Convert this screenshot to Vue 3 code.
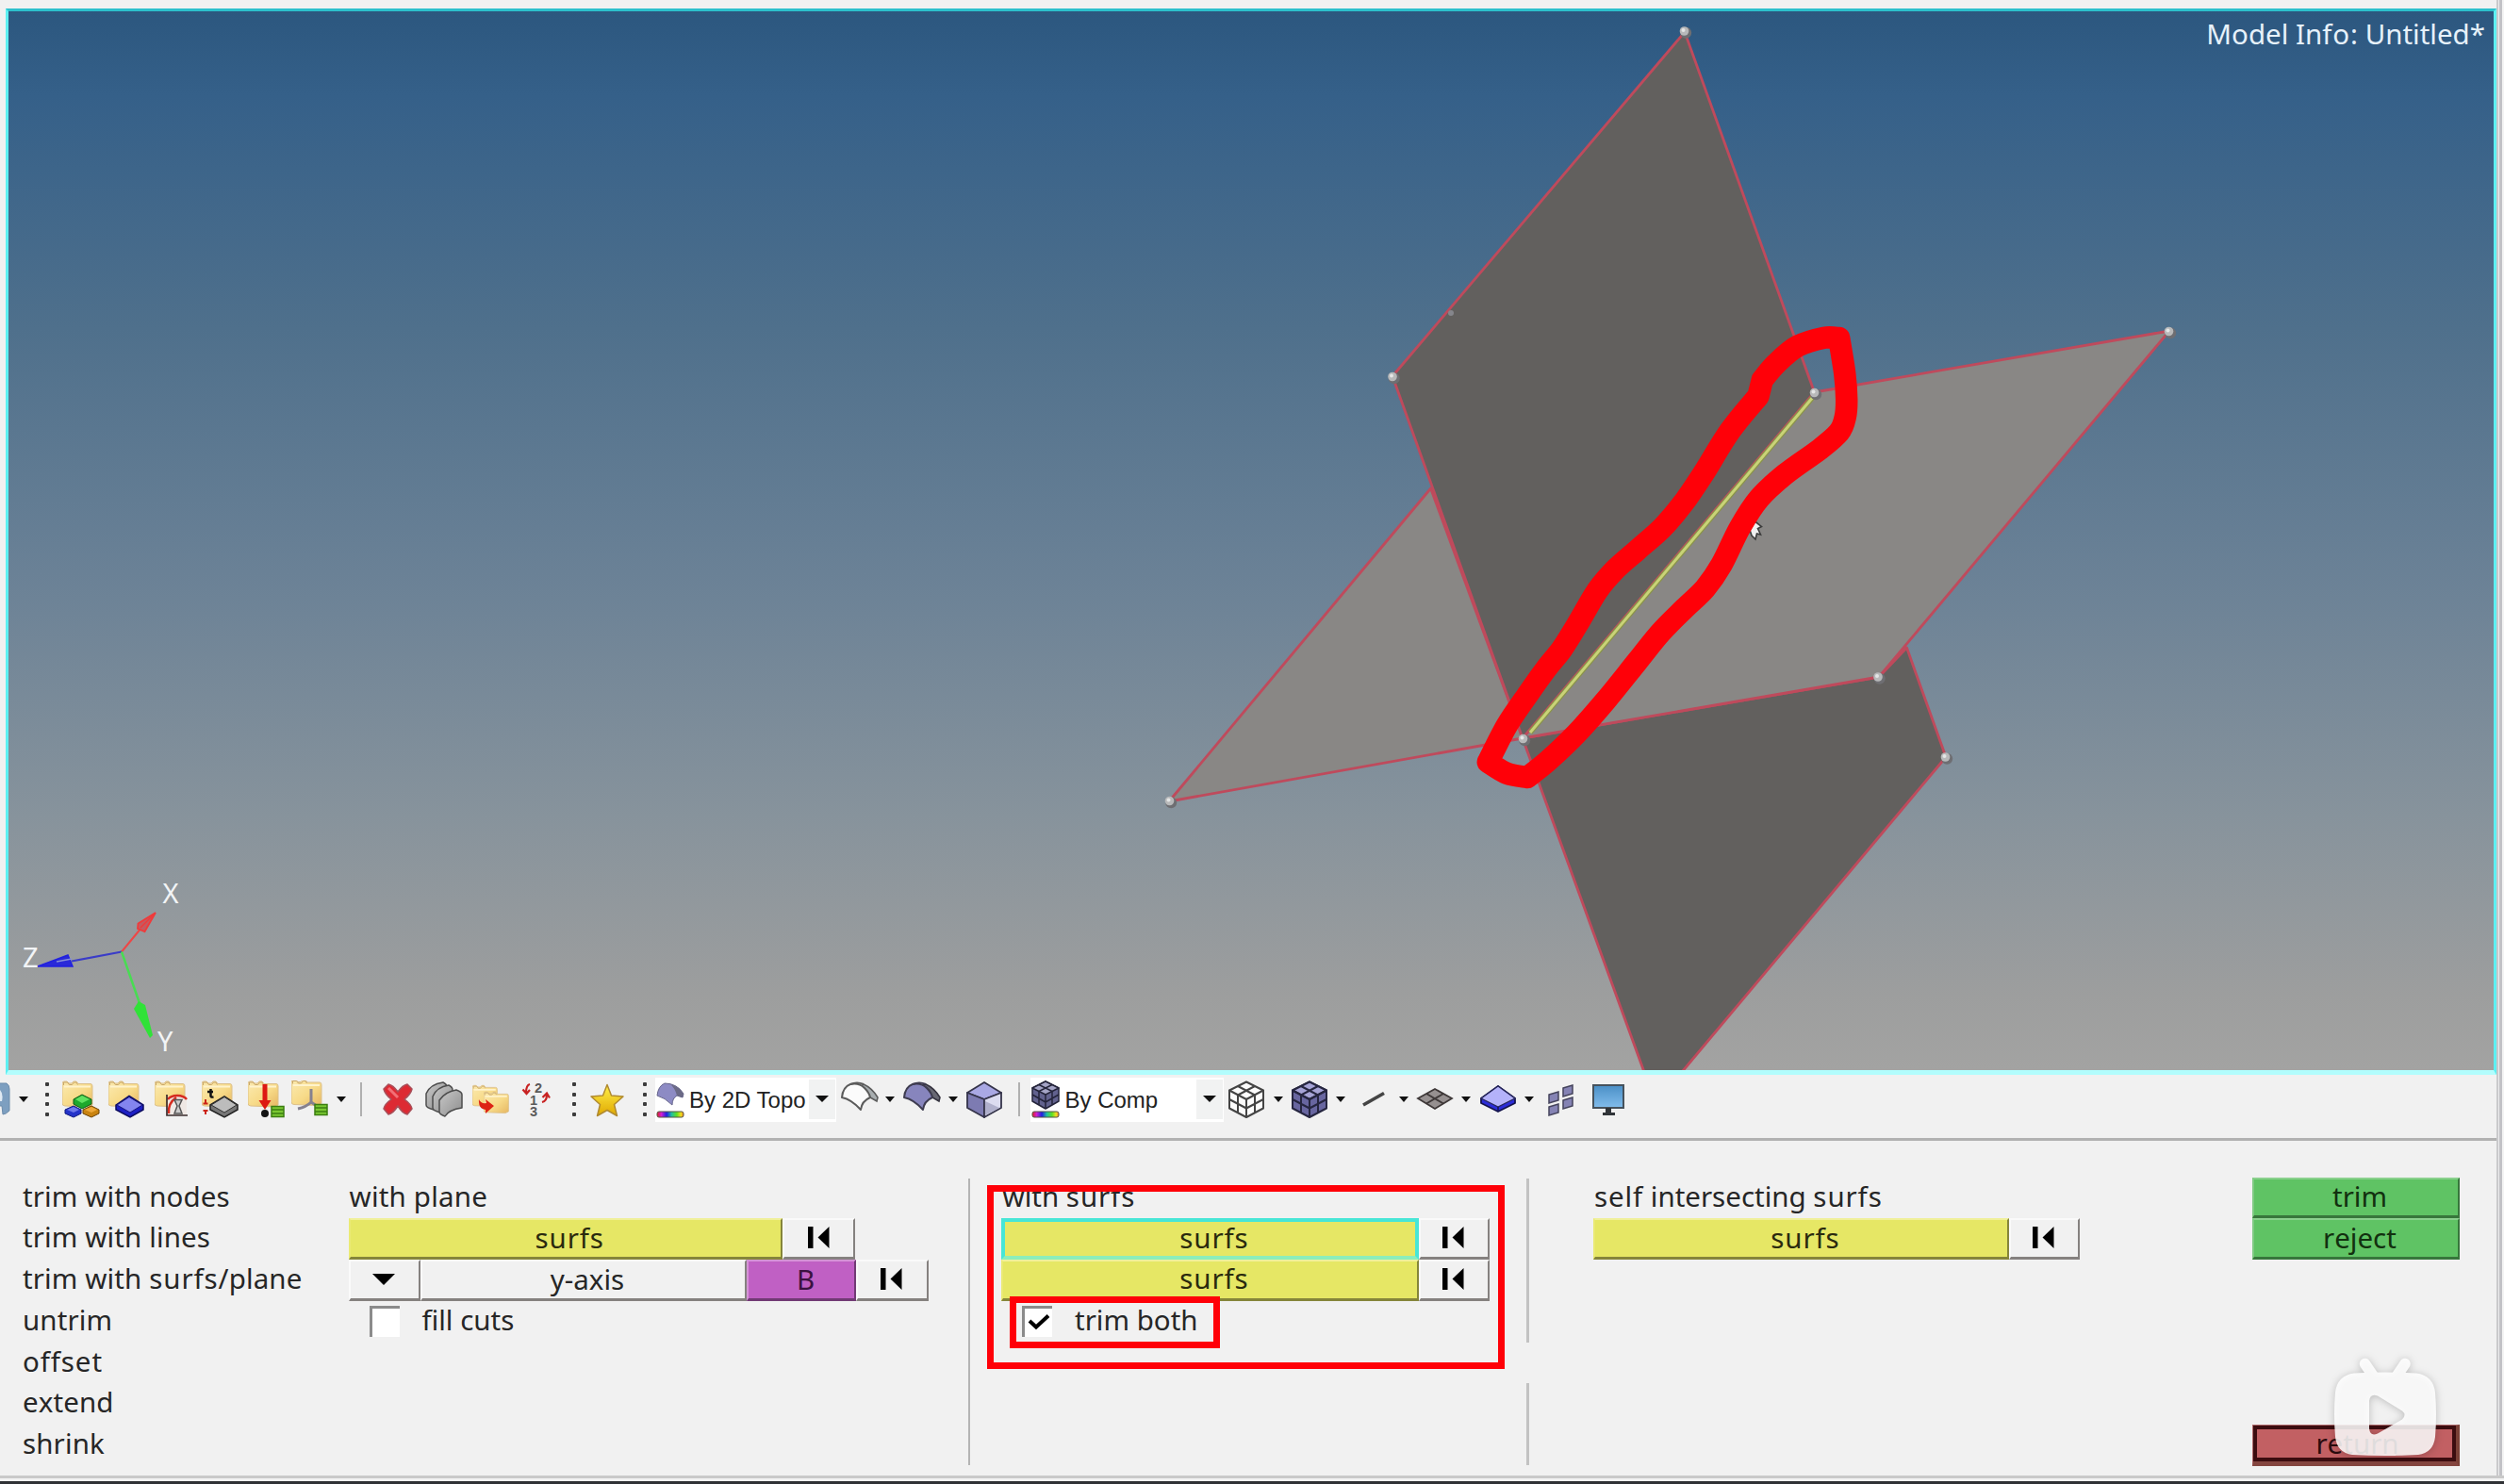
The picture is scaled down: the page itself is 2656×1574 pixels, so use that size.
<script setup>
// Each entry: leading text, the loosely spaced word, trailing text.
const menu = [
  ['trim with nodes'], ['trim with lines'], ['trim with ', 'surfs', '/plane'],
  ['untrim'], ['', 'offset'], ['extend'], ['shrink'],
]

// Toolbar tiles from left to right: kind of tile and its width.
const tools = [
  ['icon', 10, 'i-clip'], ['caret', 29], ['dots', 22],
  ['icon', 49.3, 'i-comps'], ['icon', 49.3, 'i-block'], ['icon', 49.3, 'i-prop'],
  ['icon', 49.3, 'i-thick'], ['icon', 49.3, 'i-load'], ['icon', 42.5, 'i-sys'],
  ['caret', 25], ['sep', 17], ['gap', 5.5],
  ['icon', 49, 'i-delete'], ['icon', 49, 'i-cards'], ['icon', 49, 'i-move'], ['renum', 49.5],
  ['dots', 30], ['icon', 40, 'i-star'], ['gap', 9], ['dots', 22],
  ['combo', 192, 'i-topo', 'By 2D Topo'],
  ['icon', 50, 'i-curve'], ['caret', 14], ['icon', 54, 'i-curvefill'], ['caret', 12],
  ['icon', 55, 'i-cube'], ['sep', 18], ['gap', 3.5],
  ['combo', 204.5, 'i-comp', 'By Comp'],
  ['icon', 49, 'i-wire'], ['caret', 18], ['icon', 48, 'i-mesh'], ['caret', 18],
  ['icon', 53, 'i-line'], ['caret', 10], ['icon', 57, 'i-grid'], ['caret', 9],
  ['icon', 58, 'i-box'], ['caret', 9], ['icon', 58, 'i-tiles'], ['icon', 42, 'i-screen'],
].map(([kind, w, icon, label]) => ({ kind, w, icon, label }))

// Freehand marker stroke, smoothed with Catmull-Rom segments.
const runs = [
  [[1262, 112], [1215, 111], [1130, 137], [1062, 191], [1018, 241]],
  [[1018, 241], [1005, 291]],
  [[1005, 291], [915, 398], [830, 530], [765, 622], [700, 696], [620, 765], [550, 825], [493, 890], [430, 993], [380, 1070], [328, 1133], [270, 1212], [205, 1305], [145, 1418]],
  [[145, 1418], [205, 1453], [270, 1465]],
  [[270, 1465], [335, 1415], [425, 1332], [520, 1228], [620, 1108], [695, 1018], [770, 945], [836, 883], [888, 810], [946, 697], [1008, 606], [1090, 532], [1200, 455], [1262, 402], [1282, 355], [1286, 300], [1280, 220], [1262, 112]],
]
const pt = ([x, y]) => `${(1530 + x / 3).toFixed(1)} ${(320 + y / 2.904).toFixed(1)}`
const marker = runs.map((r, k) => {
  let d = k === 0 ? `M${pt(r[0])}` : ''
  for (let i = 0; i < r.length - 1; i++) {
    const a = r[i - 1] || r[i], b = r[i], c = r[i + 1], e = r[i + 2] || c
    d += `C${pt([b[0] + (c[0] - a[0]) / 6, b[1] + (c[1] - a[1]) / 6])} ${pt([c[0] - (e[0] - b[0]) / 6, c[1] - (e[1] - b[1]) / 6])} ${pt(c)}`
  }
  return d
}).join('')

const nodes = [[1787, 33.5], [1477.5, 400], [1925, 417], [2301, 352], [1616, 784], [1241, 850], [1992.5, 718.5], [2064, 803.5]]
</script>

<template>
  <div class="app">
    <svg class="defs" width="0" height="0">
      <defs>
        <linearGradient id="gFolder" x1="0" y1="0" x2="1" y2="1"><stop offset="0" stop-color="#fbeab0" /><stop offset=".55" stop-color="#f7da88" /><stop offset="1" stop-color="#e6b762" /></linearGradient>
        <linearGradient id="gStar" x1="0" y1="0" x2="0" y2="1"><stop offset="0" stop-color="#fff04a" /><stop offset="1" stop-color="#e0a800" /></linearGradient>
        <linearGradient id="gScreen" x1="0" y1="0" x2="0" y2="1"><stop offset="0" stop-color="#4a8fc6" /><stop offset="1" stop-color="#82bdec" /></linearGradient>
        <linearGradient id="gRainbow"><stop offset="0" stop-color="#e02020" /><stop offset=".16" stop-color="#d020d0" /><stop offset=".36" stop-color="#2020e0" /><stop offset=".55" stop-color="#20c0a0" /><stop offset=".75" stop-color="#60e020" /><stop offset=".9" stop-color="#f0e020" /><stop offset="1" stop-color="#f08020" /></linearGradient>
        <linearGradient id="gGray" x1="0" y1="0" x2="1" y2="1"><stop offset="0" stop-color="#c8c8c8" /><stop offset="1" stop-color="#8e8e8e" /></linearGradient>
      </defs>
      <symbol id="folder" viewBox="0 0 40 40"><path d="M0 3.500Q0 1 2 1L5 1L7 3L10 3L12 1L15 1L17 3.500H30Q32 3.500 32 6V26L28 28L3 27Q0 27 0 24Z" fill="url(#gFolder)" stroke="#dcc08a" /><path d="M1.500 5V2h4l2 2.500h3L12.500 2H15l1.500 2.500" stroke="#c9a76a" stroke-width="1" fill="none" /><path d="M2 6.500h28" stroke="#fff3cc" stroke-width="2" fill="none" /></symbol>
      <symbol id="i-clip" viewBox="0 0 40 40"><path d="M14 3h8q3 2 3 6v23q-4 4-7 4l-1-9h-3z" fill="#7d9fc0" stroke="#6d8cab" /><path d="M14 9q5 4 3 13h-3z" fill="#dfe9f2" /></symbol>
      <symbol id="i-comps" viewBox="0 0 40 40">
        <use href="#folder" width="40" height="40" />
        <g stroke-linejoin="round"><path d="M3 31l9-4 8 4v4l-8 4-9-4z" fill="#2433c9" stroke="#101a80" /><path d="M5 31l7-3 6 3-6 3z" fill="#6e78ea" /><path d="M22 31l9-4 8 4v4l-8 4-9-4z" fill="#c98310" stroke="#6e4405" /><path d="M24 31l7-3 6 3-6 3z" fill="#eea83a" /><path d="M12 20l9-5 10 5v5l-10 5-9-5z" fill="#1ea82c" stroke="#0b5c14" /><path d="M14 20l7-4 8 4-8 4z" fill="#5fe060" /></g>
      </symbol>
      <symbol id="i-block" viewBox="0 0 40 40"><use href="#folder" width="40" height="40" /><path d="M8 26l14-9.500L37 26v5L23 39 8 31z" fill="#1d1fc4" stroke="#0c0c60" stroke-width="1.500" /><path d="M9 26l13-8.500L36 26l-13 8z" fill="#8385ef" stroke="#15157e" /></symbol>
      <symbol id="i-prop" viewBox="0 0 40 40"><use href="#folder" width="40" height="40" /><rect x="14" y="17" width="20" height="20" fill="#efe8e4" /><path d="M14 20q3-4 10-4t10 4M15 35q-1-11 8-17" fill="none" stroke="#d62c20" stroke-width="2.500" /><path d="M13 15v22h22" fill="none" stroke="#3a2c2c" stroke-width="1.700" /><path d="M21 20.500h8l-3 6.500 3 8h-8l3-8z" fill="#ccc" stroke="#555" stroke-width="1.500" /></symbol>
      <symbol id="i-thick" viewBox="0 0 40 40"><use href="#folder" width="40" height="40" /><path d="M9.500 9v7.500q0 1.500 3 1M6 12h6" stroke="#111" stroke-width="2.500" fill="none" /><path d="M4 20v5M1.500 24.500h5M4 36v-5M1.500 32h5" stroke="#cc2418" stroke-width="2" /><path d="M9 26l15-9 14 9v5L24 39 9 31z" fill="#777" stroke="#222" stroke-width="1.500" /><path d="M10 26l14-8.500L37 26l-13 8z" fill="#bcbcbc" stroke="#333" /></symbol>
      <symbol id="i-load" viewBox="0 0 40 40"><use href="#folder" width="40" height="40" /><path d="M15.500 4h5v17h4L18 31l-6.500-10h4z" fill="#dd1812" /><circle cx="18" cy="35" r="4" fill="#141414" /><rect x="25" y="27.500" width="13" height="11" fill="#7ac832" stroke="#3b7d10" stroke-width="1.500" /><path d="M25 31h13M25 35h13" stroke="#3b7d10" stroke-width="1.500" /></symbol>
      <symbol id="i-sys" viewBox="0 0 40 40"><use href="#folder" y="-1.500" width="40" height="40" /><path d="M21 9v14q-5 5-14 7M21 23l6 4" stroke="#85818f" stroke-width="3" fill="none" /><rect x="25" y="25.500" width="13" height="11" fill="#7ac832" stroke="#3b7d10" stroke-width="1.500" /><path d="M25 29h13M25 33h13" stroke="#3b7d10" stroke-width="1.500" /></symbol>
      <symbol id="i-delete" viewBox="0 0 40 40"><path d="M5 9l5-5q5 1 10 8q5-7 10-8l5 5q-1 5-8 11q7 5 8 10l-5 6q-5-1-10-9q-5 8-10 9l-5-6q1-5 8-10q-7-6-8-11z" fill="#dd2a33" stroke="#a8505a" stroke-width="1.500" stroke-linejoin="round" /><path d="M10 8l10 10" stroke="#f27076" stroke-width="3" /></symbol>
      <symbol id="i-cards" viewBox="0 0 40 40"><g fill="url(#gGray)" stroke="#4d4d4d" stroke-width="1.500" stroke-linejoin="round"><path d="M1 14Q5 4 19 2q4 2 4 5v13q-10 3-14 11q-8-2-8-5z" /><path d="M8 17q4-10 17-12q4 2 4 5v13q-10 3-13 11q-8-2-8-5z" /><path d="M15 21q6-9 18-11q6 2 6 5v14q-14 2-18 9q-6-2-6-5z" /></g></symbol>
      <symbol id="i-move" viewBox="0 0 40 40"><use href="#folder" width="33" height="36" y="3" x="1" /><use href="#folder" width="33" height="40" x="13" y="8" /><path d="M8 20q2 5 8 4l-1-4 9 7-9 8v-4Q7 30 8 20z" fill="#dd2315" /></symbol>
      <symbol id="i-star" viewBox="0 0 40 40"><path d="M20 4.500l4.500 11.500 12.500 1-9.500 8.500 3 12L20 31.500 9.500 37.500l3-12L3 17l12.500-1z" fill="url(#gStar)" stroke="#b08a30" stroke-width="1.500" stroke-linejoin="round" /></symbol>
      <symbol id="i-topo" viewBox="0 0 30 40"><path d="M1 16Q2 6 9 3q13 0 20 11l-1 4-6-2q-5 3-5 10Q9 18 1 16z" fill="#8d8bc4" stroke="#66658c" /><path d="M15 4q9 2 14 10l-1 4-6-2Q20 8 15 4z" fill="#6b6a86" /><rect x="1" y="33" width="28" height="6" rx="2" fill="url(#gRainbow)" stroke="#554" /></symbol>
      <symbol id="i-curve" viewBox="0 0 40 40"><path d="M20 7q9 4 11 11l7 4 1-4Q33 8 24 4z" fill="#a8aeb0" stroke="#5b5b5b" stroke-width="1.500" /><path d="M1 18Q2 7 10 4q9-2 15 4q5 5 6 10q-9 4-10 13Q11 20 1 18z" fill="#fbfbfb" stroke="#5b5b5b" stroke-width="2" stroke-linejoin="round" /><path d="M10 4q7-3 14 0" stroke="#5b5b5b" stroke-width="2" fill="none" /></symbol>
      <symbol id="i-curvefill" viewBox="0 0 40 40"><path d="M20 5q9 4 11 13l7 4 1-4Q33 8 24 4z" fill="#686873" stroke="#34323e" stroke-width="1.500" /><path d="M1 18Q2 7 10 4q9-2 15 4q5 5 6 10q-9 4-10 13Q11 20 1 18z" fill="#8785bd" stroke="#3e3c50" stroke-width="2" stroke-linejoin="round" /><path d="M10 4q7-3 14 0" stroke="#3e3c50" stroke-width="2" fill="none" /></symbol>
      <symbol id="i-cube" viewBox="0 0 40 40"><g stroke="#35344a" stroke-width="1.800" stroke-linejoin="round"><path d="M20 2l18 11-18 7L2 13z" fill="#a9a8e4" /><path d="M2 13l18 7v19L2 29z" fill="#7d7bb2" /><path d="M20 20l18-7v16L20 39z" fill="#dcdcf0" /></g><path d="M21 37V22l15 7z" fill="#b0b0cc" /></symbol>
      <symbol id="i-comp" viewBox="0 0 30 40"><g stroke="#24243a" stroke-width="1.500" stroke-linejoin="round"><path d="M15 1l14 7v14l-14 8-14-8V8z" fill="#62628e" /><path d="M15 1l14 7-14 7L1 8z" fill="#a4a4c6" /><path d="M15 15v15M1 15l14 8 14-8M8 4.500l14 7v14M22 4.500l-14 7v14" fill="none" /></g><rect x="1" y="33" width="28" height="6" rx="2" fill="url(#gRainbow)" stroke="#554" /></symbol>
      <symbol id="i-wire" viewBox="0 0 40 40"><g stroke="#444" stroke-width="2" stroke-linejoin="round"><path d="M20 1.500l18 9v19L20 39 2 29.500v-19z" fill="#fcfcfc" /><path d="M20 20v19M2 10.500l18 9.500 18-9.500M11 6l18 9.500v19M29 6l-18 9.500v19M2 20l18 9.500L38 20" fill="none" /></g></symbol>
      <symbol id="i-mesh" viewBox="0 0 40 40"><g stroke="#262640" stroke-width="2" stroke-linejoin="round"><path d="M20 1.500l18 9v19L20 39 2 29.500v-19z" fill="#6866a0" /><path d="M20 1.500l18 9L20 20 2 10.500z" fill="#a6a4d6" /><path d="M20 20v19M2 10.500l18 9.500 18-9.500M11 6l18 9.500v19M29 6l-18 9.500v19M2 20l18 9.500L38 20" fill="none" /></g></symbol>
      <symbol id="i-line" viewBox="0 0 40 40"><path d="M9 26L31 13.500" stroke="#444" stroke-width="3.600" /></symbol>
      <symbol id="i-grid" viewBox="0 0 40 40"><g stroke="#3e3838" stroke-width="1.800"><path d="M20 9l18 10-18 11L2 19z" fill="#969090" /><path d="M11 14l18 10.500M29 14L11 24.500" /></g></symbol>
      <symbol id="i-box" viewBox="0 0 40 40"><path d="M2 19L20 6l18 13v5L20 33 2 24z" fill="#2c2cd8" stroke="#14144e" stroke-width="1.800" stroke-linejoin="round" /><path d="M2 19L20 6l18 13-18 9z" fill="#b4b2fa" stroke="#26265a" stroke-width="1.300" /><path d="M20 28v5" stroke="#14144e" stroke-width="1.500" /></symbol>
      <symbol id="i-tiles" viewBox="0 0 40 40"><g fill="#8583b4" stroke="#45445c" stroke-width="1.500"><path d="M7 15l10-3v9l-10 3zM7 28l10-3v9l-10 3zM22 8l10-3v9l-10 3zM22 21l10-3v9l-10 3z" /></g></symbol>
      <symbol id="i-screen" viewBox="0 0 40 40"><rect x="4" y="5" width="32" height="24" fill="url(#gScreen)" stroke="#46525c" stroke-width="2" /><path d="M17 29h6v5h4v3H14v-3h3z" fill="#303438" /></symbol>
    </svg>

    <div class="main">
      <div class="view">
        <svg class="scene" viewBox="0 0 2656 1574" width="2656" height="1574">
          <g class="edge">
            <path class="light" d="M1517.600 518L1240 850 1615 783z" />
            <path class="dark" d="M1615 783L1993 718 2022.500 687 2064 803 1784 1137 1744 1137z" />
            <path class="light" d="M1924.500 416L2301 351 1993 718 1615 783z" />
            <path class="dark" d="M1787 34L1924.500 416 1615 783 1477 399z" />
          </g>
          <circle cx="1539" cy="332" r="3" fill="#85868c" />
          <path d="M1924 420L1623 777" stroke="#8a944a" stroke-width="5.500" />
          <path d="M1924 420L1623 777" stroke="#c9d377" stroke-width="3" />
          <g v-for="n in nodes" :key="n[0]">
            <circle :cx="n[0] + 1.200" :cy="n[1] + 1.200" r="6" fill="#6e6e72" />
            <circle :cx="n[0] - .5" :cy="n[1] - .5" r="4.800" fill="#b8b9ba" />
            <circle :cx="n[0] - 1.500" :cy="n[1] - 1.500" r="2" fill="#e4e6e6" />
          </g>
          <path d="M1856 562L1861.500 553 1868.500 558.500 1864.500 560.500 1867.500 567 1863.500 566 1862 572 1858 568z" fill="#f0f0f0" stroke="#3c3c3c" stroke-width="1.600" />
          <path :d="marker" class="marker" />

          <path d="M129 1009.500L150 984" stroke="#ee4646" stroke-width="2" />
          <path d="M165 968L146.500 979.500 146 985 153.500 988z" fill="#c55a60" stroke="#f03a3a" stroke-width="1.800" />
          <path d="M163 970L149 984" stroke="#f03a3a" stroke-width="1.500" />
          <path d="M129 1009.500L76 1019.500" stroke="#3a3cc8" stroke-width="2.200" />
          <path d="M40 1025L72 1013 77 1025z" fill="#2a2ad8" stroke="#2020e0" stroke-width="1.500" />
          <path d="M60 1020L76 1017" stroke="#8890d8" stroke-width="1.500" />
          <path d="M129 1009.500L148 1064" stroke="#48dd52" stroke-width="2.500" />
          <path d="M147 1062L142 1070 159 1101 162 1098 154 1066z" fill="#30e238" />
          <g class="axis"><text x="172.500" y="957.500">X</text><text x="24" y="1026">Z</text><text x="167" y="1115">Y</text></g>
        </svg>
        <div class="info">Model In<span class="loose">fo</span>: Untitled*</div>
      </div>
      <div class="toolbar">
        <div v-for="(t, i) in tools" :key="i" class="tile" :class="t.kind" :style="{ width: t.w + 'px' }">
          <svg v-if="t.kind === 'icon'" class="ico" width="40" height="40"><use :href="'#' + t.icon" width="40" height="40" /></svg>
          <svg v-else-if="t.kind === 'renum'" class="ico" width="40" height="40">
            <g class="digits"><text x="18" y="13">2</text><text x="13" y="25.500">1</text><text x="13" y="38">3</text></g>
            <path d="M13 4q-4 1-4 9M5.500 9.500l4 4.500 3.500-4M26 23q5-1 5-8M26.500 18l4.500-4.500 3 5" stroke="#c82222" stroke-width="2.200" fill="none" />
          </svg>
          <i v-else-if="t.kind === 'caret'" class="tri"></i>
          <template v-else-if="t.kind === 'dots'"><b v-for="k in 4" :key="k"></b></template>
          <template v-else-if="t.kind === 'combo'">
            <svg width="30" height="40"><use :href="'#' + t.icon" width="30" height="40" /></svg>
            <span>{{ t.label }}</span>
            <em><i class="tri big"></i></em>
          </template>
        </div>
      </div>
      <div class="panel">
        <ul class="menu"><li v-for="(m, i) in menu" :key="i">{{ m[0] }}<span v-if="m[1]" class="loose">{{ m[1] }}</span>{{ m[2] }}</li></ul>

        <section class="plane">
          <div class="row">with plane</div>
          <div class="row"><button class="btn yellow">surfs</button><button class="btn reset"><svg width="24" height="24"><path d="M0 0h5.500v23H0zM22.500 0v23L10.500 11.500z" /></svg></button></div>
          <div class="row">
            <button class="btn drop"><svg width="24" height="12"><path d="M0 0h24L12 12z" /></svg></button>
            <button class="btn axisbtn">y-axis</button><button class="btn purple">B</button>
            <button class="btn reset"><svg width="24" height="24"><path d="M0 0h5.500v23H0zM22.500 0v23L10.500 11.500z" /></svg></button>
          </div>
          <div class="row check"><span class="box"></span>fill cuts</div>
        </section>

        <div class="divider"></div>

        <section class="surfs">
          <div class="row"><p>with <span class="loose">surfs</span></p></div>
          <div class="row"><button class="btn yellow active">surfs</button><button class="btn reset"><svg width="24" height="24"><path d="M0 0h5.500v23H0zM22.500 0v23L10.500 11.500z" /></svg></button></div>
          <div class="row"><button class="btn yellow">surfs</button><button class="btn reset"><svg width="24" height="24"><path d="M0 0h5.500v23H0zM22.500 0v23L10.500 11.500z" /></svg></button></div>
          <div class="row check"><span class="box"><svg width="24" height="18"><path d="M2 7l7 6.500L22 1.500" fill="none" stroke="#000" stroke-width="4" /></svg></span>trim both</div>
          <div class="mark outer"></div>
          <div class="mark inner"></div>
        </section>

        <div class="split"><div class="part upper"></div><div class="part lower"></div></div>

        <section class="self">
          <div class="row"><p><span class="loose">self</span> intersecting <span class="loose">surfs</span></p></div>
          <div class="row"><button class="btn yellow">surfs</button><button class="btn reset"><svg width="24" height="24"><path d="M0 0h5.500v23H0zM22.500 0v23L10.500 11.500z" /></svg></button></div>
        </section>

        <section class="actions">
          <button class="btn green">trim</button>
          <button class="btn green">reject</button>
          <button class="btn red">return</button>
          <svg class="tv" width="130" height="126" viewBox="2465 1430 130 126">
            <g>
              <path d="M2508.500 1446.500L2519 1462M2551 1446.500L2540.500 1462" fill="none" stroke="#fff" stroke-width="11.500" stroke-linecap="round" />
              <path fill-rule="evenodd" d="M2497 1456.500Q2530 1454.500 2563 1456.500 2581 1459 2583 1477 2585 1500 2583 1524 2581 1541 2565 1543 2530 1545 2495 1543 2479 1541 2477 1524 2475 1500 2477 1477 2479 1459 2497 1456.500zM2513 1486v29q1 9 9 5.500l26-15q5-5 0-9l-26-16q-8-3-9 5.500z" fill="#fff" />
            </g>
          </svg>
        </section>
      </div>
    </div>
    <div class="rail"></div>
    <div class="base"></div>
  </div>
</template>

<style>
html, body { margin: 0; background: #f1f1f1; overflow: hidden; }
</style>

<style scoped>
.app { width: 2656px; height: 1574px; display: grid; grid-template-columns: 2648px 8px; grid-template-rows: 1565px 9px; background: #f1f1f1; font-family: "Noto Sans", "Open Sans", sans-serif; font-size: 29.5px; font-kerning: none; color: #262626; overflow: hidden; }
.defs { position: absolute; }
.main { display: flex; flex-direction: column; }
.rail { background: linear-gradient(90deg, #c9c9cb 0 2px, #ededee 2px 3px, #c2c2c6 3px 6px, #f4f4f4 6px); }
.base { grid-column: 1 / 3; background: linear-gradient(#c9c9c9 0 3px, #f2f2f2 3px 6px, #303236 6px); }
.view { position: relative; box-sizing: border-box; width: 2642px; height: 1131px; margin: 9px 0 0 6px; border: 3px solid #5ef0f2; border-top-color: #2cc0cc; border-bottom: 5px solid #b2fdfd; background: linear-gradient(#2c577f, #356089 8%, #4f708c 30%, #6a8196 53%, #87939c 76%, #9d9e9e 93%, #a3a3a2); overflow: hidden; }
.scene { position: absolute; left: -9px; top: -12px; }
.edge { stroke: #bf4a5c; stroke-width: 2.8; stroke-linejoin: round; }
.light { fill: #898785; }
.dark { fill: #62605e; }
.marker { fill: none; stroke: #ff0008; stroke-width: 23.5; stroke-linecap: round; stroke-linejoin: round; }
.axis { fill: #f2f4f6; font-size: 29px; }
.info { position: relative; text-align: right; color: #e6f1fa; margin: 4px 9px 0 0; line-height: 40px; }
.loose { letter-spacing: .9px; }
.toolbar { display: flex; align-items: center; box-sizing: border-box; height: 70px; padding-bottom: 15px; border-bottom: 3px solid #b1b1b1; }
.tile { flex: none; height: 40px; display: flex; justify-content: center; align-items: center; }
.ico { flex: none; }
.digits { font: bold 14.5px "Liberation Sans", Arial, sans-serif; fill: #5a5a5a; }
.tri { width: 0; height: 0; flex: none; border: 5.5px solid transparent; border-top: 6.5px solid #111; border-bottom: 0; }
.tri.big { border-width: 7.5px 7px 0; }
.dots { flex-direction: column; gap: 6.7px; }
.dots b { width: 4px; height: 4px; background: #3c3c3c; border-radius: 1px; }
.sep::before { content: ""; width: 2px; height: 36px; background: #b0b0b0; }
.combo { box-sizing: border-box; height: 47px; background: #fff; justify-content: flex-start; padding-left: 1px; font: 24px "Liberation Sans", Arial, sans-serif; color: #222; }
.combo span { margin-left: 5px; padding-top: 1px; flex: 1; white-space: nowrap; }
.combo em { width: 28px; height: 42px; background: #f1f2f2; margin-right: 1px; display: flex; align-items: center; justify-content: center; padding-bottom: 2px; box-sizing: border-box; }
.panel { display: flex; height: 355px; box-sizing: border-box; padding-top: 38.5px; align-items: flex-start; }
.menu { list-style: none; margin: 0; padding: 0 0 0 24px; width: 345.5px; letter-spacing: .12px; }
.menu li, .row { height: 43.75px; line-height: 40px; white-space: nowrap; }
.row { display: flex; }
.row p { margin: 0; }
.plane { width: 657.5px; }
.plane .row:first-child { padding-left: 1px; letter-spacing: .2px; }
.divider { width: 2px; height: 304px; margin-top: 1.5px; background: #b4b4b4; }
.surfs { position: relative; width: 557px; padding-left: 33px; }
.surfs .row:first-child { padding-left: 1.5px; }
.split { width: 3px; height: 306px; display: flex; flex-direction: column; gap: 43px; }
.part { background: #c2c2c2; }
.upper { height: 174px; margin-top: 1.5px; }
.lower { height: 87px; }
.self { width: 698.5px; padding-left: 68px; }
.self .row:first-child { padding-left: 1px; }
.actions { position: relative; width: 220px; height: 306.25px; display: flex; flex-direction: column; }
.btn { box-sizing: border-box; height: 43.75px; margin: 0; padding: 0 0 1px; flex: none; font: inherit; font-kerning: none; color: #262626; line-height: 36px; border: solid; border-width: 2px 2px 3px; border-color: #fafafa #85817f #85817f #fafafa; background: #f1f1f1; display: flex; align-items: center; justify-content: center; border-radius: 0; }
.yellow { background: #e6e765; border-color: #f0f09a #85853a #85853a #eaea74; color: #2a2a0e; padding: 0 0 2px 9px; width: 460.5px; letter-spacing: .9px; }
.surfs .yellow { width: 443px; }
.self .yellow { width: 441px; }
.reset { width: 77px; }
.surfs .reset, .self .reset { width: 74.5px; }
.active { border: 4px solid #48e6d6; border-bottom-color: #8ceebb; line-height: 34px; padding: 0 0 2px 9px; }
.drop { width: 76px; padding-right: 2px; }
.axisbtn { width: 346px; padding-left: 9px; }
.purple { background: #c060c4; border-color: #d492d6 #713a74 #713a74 #d492d6; width: 116px; padding-left: 10px; color: #3a1240; }
.green { width: 220px; background: #5fc364; border-color: #8ad08d #37763b #37763b #7fca83; padding: 0 0 2px 9px; color: #12300f; }
.red { margin-top: auto; width: 220px; background: #c26063; border-width: 1px 4px 5px 1px; border-color: #b06a6c #7a4036 #84453f #b06a6c; box-shadow: inset 0 0 0 4px #3c0d10; line-height: 36px; padding: 0 0 0 7px; color: #2a0c0e; }
.check { align-items: flex-start; }
.plane .check, .surfs .check { height: 43px; }
.box { box-sizing: border-box; width: 32px; height: 33px; margin: 5px 24px 0 22px; background: #fff; border: solid #8b8b8b; border-width: 3px 0 0 3px; display: flex; align-items: center; justify-content: center; }
.mark { position: absolute; box-sizing: border-box; border: 7px solid #ff0008; }
.outer { left: 18px; top: 8.5px; width: 549px; height: 195px; }
.inner { left: 42px; top: 126.5px; width: 223px; height: 55px; }
.tv { position: absolute; left: 76px; top: 181.5px; overflow: visible; filter: drop-shadow(0 1px 4px rgba(0, 0, 0, .25)); }
.tv g { opacity: .86; }
</style>
